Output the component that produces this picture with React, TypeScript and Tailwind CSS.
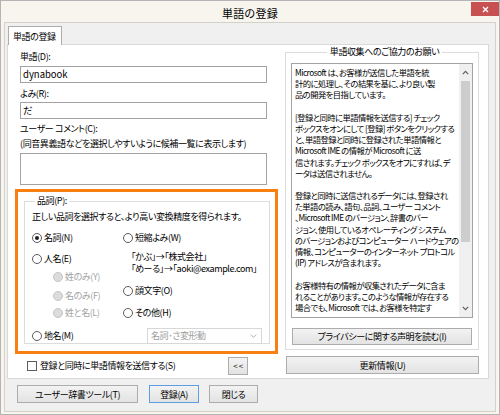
import clsx from "clsx"

const notice = [
  "Microsoft は、お客様が送信した単語を統",
  "計的に処理し、その結果を基に、より良い製",
  "品の開発を目指しています。",
  "",
  "[登録と同時に単語情報を送信する] チェック",
  "ボックスをオンにして [登録] ボタンをクリックする",
  "と、単語登録と同時に登録された単語情報と",
  "Microsoft IME の情報が Microsoft に送",
  "信されます。チェック ボックスをオフにすれば、デ",
  "ータは送信されません。",
  "",
  "登録と同時に送信されるデータには、登録され",
  "た単語の読み、語句、品詞、ユーザー コメント",
  "、Microsoft IME のバージョン、辞書のバー",
  "ジョン、使用しているオペレーティング システム",
  "のバージョンおよびコンピューター ハードウェアの",
  "情報、コンピューターのインターネット プロトコル",
  "(IP) アドレスが含まれます。",
  "",
  "お客様特有の情報が収集されたデータに含ま",
  "れることがあります。このような情報が存在する",
  "場合でも、Microsoft では、お客様を特定す",
]

function Radio({
  label,
  checked,
  disabled,
  className,
}: {
  label: string
  checked?: boolean
  disabled?: boolean
  className?: string
}) {
  return (
    <div className={clsx("flex items-center h-[12px] leading-[12px]", className)}>
      <span
        className={clsx(
          "w-[10px] h-[10px] rounded-full border flex items-center justify-center shrink-0",
          disabled ? "border-[#c4c4c4] bg-[#dcdcdc]" : "border-[#5c5c5c] bg-white"
        )}
      >
        {checked && <span className="w-[4px] h-[4px] rounded-full bg-[#1f1f1f]" />}
      </span>
      <span className={clsx("ml-[2px] whitespace-nowrap", disabled ? "text-[#a3a3a3]" : "text-black")}>
        {label}
      </span>
    </div>
  )
}

function Button({
  label,
  className,
  primary,
}: {
  label: string
  className?: string
  primary?: boolean
}) {
  return (
    <button
      type="button"
      className={clsx(
        "flex items-center justify-center border bg-linear-to-b from-[#f3f3f3] to-[#e3e3e3] text-black leading-none whitespace-nowrap",
        primary ? "border-[#5b9fe2]" : "border-[#acacac]",
        className
      )}
    >
      {label}
    </button>
  )
}

function Chevron({ up }: { up?: boolean }) {
  return (
    <svg width="7" height="5" viewBox="0 0 7 5" className="block">
      <path
        d={up ? "M0.8 4.2 L3.5 1.3 L6.2 4.2" : "M0.8 0.8 L3.5 3.7 L6.2 0.8"}
        fill="none"
        stroke="#606060"
        strokeWidth="1.2"
      />
    </svg>
  )
}

export default function App() {
  return (
    <div className="w-[500px] h-[415px] bg-[#f7f5ee] border border-[#b4b4b4] flex flex-col text-[9px] tracking-[-0.4px] text-black font-['Noto_Sans_CJK_JP',sans-serif] [font-feature-settings:'palt'] overflow-hidden">
      {/* title bar */}
      <div className="relative h-[21px] shrink-0 flex items-center justify-center">
        <span className="text-[11px] leading-none mt-[3px] tracking-[0.3px]">単語の登録</span>
        <div className="absolute right-[0px] top-[1px] w-[28px] h-[14px] bg-[#c75050] flex items-center justify-center">
          <svg width="7" height="7" viewBox="0 0 7 7">
            <path d="M1 1 L6 6 M6 1 L1 6" stroke="white" strokeWidth="1.4" />
          </svg>
        </div>
      </div>

      {/* client area */}
      <div className="mx-[3px] h-[390px] bg-[#f0f0f0] border border-[#d3d1c8] pl-[2px] pt-[3px]">
        {/* tab */}
        <div className="flex">
          <div className="relative z-10 -mb-px ml-[1px] h-[19px] w-[54px] bg-white border border-b-0 border-[#acacac] flex items-center pl-[4px] leading-none">
            単語の登録
          </div>
        </div>

        {/* tab page */}
        <div className="w-[482px] h-[335px] bg-white border border-[#d9d9d9] flex pl-[7px]">
          {/* left column */}
          <div className="w-[263px] flex flex-col">
            <div className="ml-[5px] mt-[6px] h-[12px] leading-[12px]">単語(D):</div>
            <div className="ml-[5px] mt-[3px] w-[247px] h-[17px] border border-[#a3a3a3] bg-white flex items-center pl-[2px] text-[9.5px] tracking-normal">
              dynabook
            </div>
            <div className="ml-[5px] mt-[5px] h-[12px] leading-[12px]">よみ(R):</div>
            <div className="ml-[5px] mt-[2px] w-[247px] h-[17px] border border-[#a3a3a3] bg-white flex items-center pl-[2px] text-[9.5px]">
              だ
            </div>
            <div className="ml-[5px] mt-[4px] h-[12px] leading-[12px]">ユーザー コメント(C):</div>
            <div className="ml-[5px] mt-[3px] h-[12px] leading-[12px] whitespace-nowrap">
              (同音異義語などを選択しやすいように候補一覧に表示します)
            </div>
            <div className="ml-[5px] mt-[3px] w-[247px] h-[32px] border border-[#a3a3a3] bg-white" />

            {/* highlighted part of speech box */}
            <div className="mt-[4px] w-[263px] h-[165px] border-[3px] border-[#f98010] pl-[6px] pt-[3px]">
              <fieldset className="w-[246px] h-[149px] border border-[#dcdcdc] pl-[7px]">
                <legend className="ml-[3px] px-[2px] h-[12px] leading-[12px]">品詞(P):</legend>
                <div className="mt-[4px] h-[12px] leading-[12px] whitespace-nowrap">
                  正しい品詞を選択すると、より高い変換精度を得られます。
                </div>
                <div className="mt-[9px] flex">
                  <div className="w-[91px] flex flex-col">
                    <Radio label="名詞(N)" checked />
                    <Radio label="人名(E)" className="mt-[9px]" />
                    <Radio label="姓のみ(Y)" disabled className="mt-[6px] ml-[21px]" />
                    <Radio label="名のみ(F)" disabled className="mt-[7px] ml-[21px]" />
                    <Radio label="姓と名(L)" disabled className="mt-[5px] ml-[21px]" />
                  </div>
                  <div className="flex flex-col">
                    <Radio label="短縮よみ(W)" />
                    <div className="mt-[7px] ml-[8px] h-[12px] leading-[12px] whitespace-nowrap">「かぶ」→「株式会社」</div>
                    <div className="ml-[8px] h-[12px] leading-[12px] whitespace-nowrap">「めーる」→「aoki@example.com」</div>
                    <Radio label="顔文字(O)" className="mt-[10px]" />
                    <Radio label="その他(H)" className="mt-[10px]" />
                  </div>
                </div>
                <div className="mt-[9px] flex items-center">
                  <div className="w-[115px]">
                    <Radio label="地名(M)" />
                  </div>
                  <div className="w-[115px] h-[16px] border border-[#d7d7d7] bg-white flex items-center justify-between pl-[3px] pr-[4px] text-[#9c9c9c]">
                    <span>名詞･さ変形動</span>
                    <svg width="7" height="4" viewBox="0 0 7 4">
                      <path d="M0.8 0.6 L3.5 3.3 L6.2 0.6" fill="none" stroke="#b0b0b0" strokeWidth="1" />
                    </svg>
                  </div>
                </div>
              </fieldset>
            </div>

            <div className="mt-[3px] flex items-center">
              <div className="ml-[12px] flex items-center">
                <span className="w-[10px] h-[10px] border border-[#5c5c5c] bg-white" />
                <span className="ml-[3px] whitespace-nowrap">登録と同時に単語情報を送信する(S)</span>
              </div>
              <Button label="< <" className="ml-auto mr-[30px] w-[20px] h-[18px] text-[8px]" />
            </div>
          </div>

          {/* right column */}
          <div className="ml-[7px] w-[194px] flex flex-col">
            <fieldset className="mt-[1px] w-[194px] border border-[#dcdcdc] pl-[5px] pb-[4px]">
              <legend className="mx-auto px-[3px] h-[12px] leading-[12px] whitespace-nowrap">
                単語収集へのご協力のお願い
              </legend>
              <div className="mt-[5px] w-[182px] h-[255px] border border-[#a3a3a3] bg-white flex overflow-hidden">
                <div className="flex-1 pl-[3px] pt-[3px] text-[8.3px] tracking-[-0.55px] leading-[11.2px] overflow-hidden">
                  {notice.map((line, i) => (
                    <div key={i} className="h-[11.2px] whitespace-nowrap">
                      {line}
                    </div>
                  ))}
                </div>
                <div className="w-[13px] bg-[#f0f0f0] flex flex-col items-center">
                  <div className="h-[17px] flex items-center justify-center">
                    <Chevron up />
                  </div>
                  <div className="w-[9px] h-[161px] bg-[#cdcdcd]" />
                  <div className="mt-auto h-[17px] flex items-center justify-center">
                    <Chevron />
                  </div>
                </div>
              </div>
              <Button label="プライバシーに関する声明を読む(I)" className="mt-[10px] ml-[1px] w-[180px] h-[17px]" />
            </fieldset>
            <Button label="更新情報(U)" className="mt-[6px] ml-[1px] w-[193px] h-[18px]" />
          </div>
        </div>

        {/* bottom buttons */}
        <div className="mt-[6px] pl-[10px] flex">
          <Button label="ユーザー辞書ツール(T)" className="w-[121px] h-[18px]" />
          <Button label="登録(A)" primary className="ml-[11px] w-[50px] h-[18px]" />
          <Button label="閉じる" className="ml-[10px] w-[49px] h-[18px]" />
        </div>
      </div>
    </div>
  )
}
